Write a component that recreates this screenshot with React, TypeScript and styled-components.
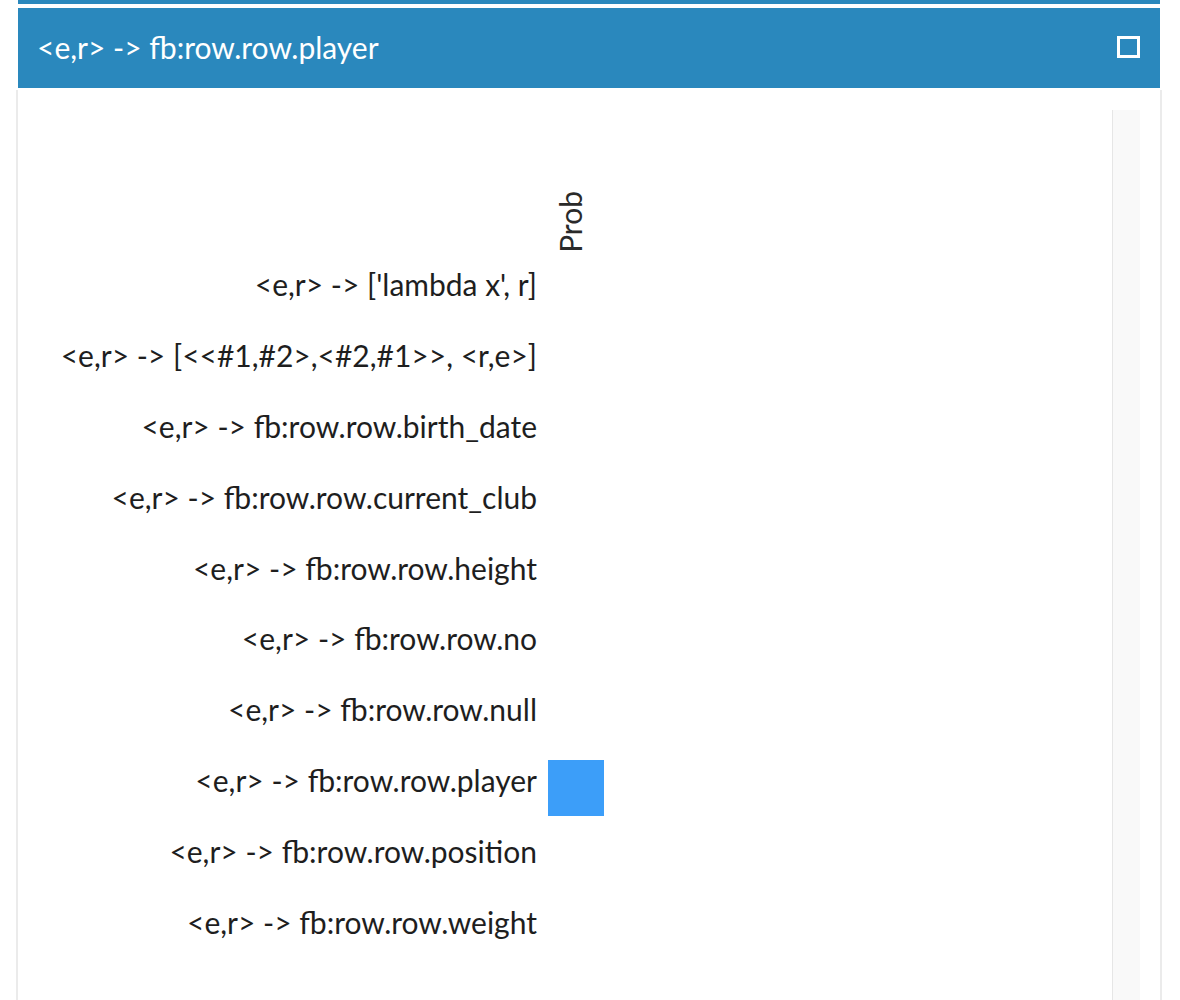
import React from 'react';
import styled, { createGlobalStyle } from 'styled-components';

const GlobalStyle = createGlobalStyle`
  html, body {
    margin: 0;
    padding: 0;
    background: #ffffff;
  }
  body {
    font-family: Lato, "Open Sans", "Liberation Sans", sans-serif;
    color: #1e1e1e;
  }
`;

const Page = styled.div`
  width: 1180px;
  height: 1000px;
  overflow: hidden;
  display: flex;
  flex-direction: column;
`;

const PrevPanelEdge = styled.div`
  margin: 0 20px 0 18px;
  height: 4px;
  background: #2a88bd;
`;

const Panel = styled.section`
  margin-top: 4px;
  flex: 1;
  display: flex;
  flex-direction: column;
`;

const PanelHeader = styled.header`
  margin: 0 20px 0 18px;
  height: 80px;
  background: #2a88bd;
  color: #ffffff;
  display: flex;
  align-items: center;
  justify-content: space-between;
  padding: 0 20px 2px 19px;
  box-sizing: border-box;
`;

const Title = styled.h3`
  margin: 0;
  font-size: 30px;
  font-weight: 400;
`;

const MaximizeButton = styled.button`
  border: none;
  background: none;
  padding: 0;
  width: 23px;
  height: 22px;
  display: flex;
  cursor: pointer;
`;

const PanelBody = styled.div`
  flex: 1;
  margin: 2px 18px 0 16px;
  border: 2px solid #ebebeb;
  border-top: none;
  border-bottom: none;
  padding: 20px 20px 0 0;
  display: flex;
`;

const Content = styled.div`
  flex: 1;
`;

const ScrollTrack = styled.div`
  width: 27px;
  border-left: 1px solid #e6e6e6;
  background: #f9f9f9;
`;

const Heatmap = styled.div`
  display: grid;
  grid-template-columns: 519px 56px;
  column-gap: 11px;
  grid-auto-rows: 70.8px;
  grid-template-rows: 147px;
`;

const ColumnLabelSpacer = styled.div``;

const ColumnLabel = styled.div`
  display: flex;
  align-items: flex-end;
  justify-content: center;
  padding-bottom: 4px;
  box-sizing: border-box;
`;

const VerticalText = styled.span`
  writing-mode: vertical-rl;
  transform: rotate(180deg);
  font-size: 30px;
  color: #2a2a2a;
  margin-right: 12px;
`;

const RowLabel = styled.div`
  display: flex;
  align-items: center;
  justify-content: flex-end;
  padding-bottom: 16px;
  box-sizing: border-box;
  font-size: 30px;
  white-space: nowrap;
`;

const CellSlot = styled.div`
  display: flex;
  align-items: center;
`;

const Cell = styled.div<{ $value: number }>`
  width: 56px;
  height: 56px;
  background: ${(p) => (p.$value > 0 ? '#3c9ef9' : 'transparent')};
`;

const rows: { label: string; prob: number }[] = [
  { label: "<e,r> -> ['lambda x', r]", prob: 0 },
  { label: '<e,r> -> [<<#1,#2>,<#2,#1>>, <r,e>]', prob: 0 },
  { label: '<e,r> -> fb:row.row.birth_date', prob: 0 },
  { label: '<e,r> -> fb:row.row.current_club', prob: 0 },
  { label: '<e,r> -> fb:row.row.height', prob: 0 },
  { label: '<e,r> -> fb:row.row.no', prob: 0 },
  { label: '<e,r> -> fb:row.row.null', prob: 0 },
  { label: '<e,r> -> fb:row.row.player', prob: 1 },
  { label: '<e,r> -> fb:row.row.position', prob: 0 },
  { label: '<e,r> -> fb:row.row.weight', prob: 0 },
];

export default function App() {
  return (
    <Page>
      <GlobalStyle />
      <PrevPanelEdge />
      <Panel>
        <PanelHeader>
          <Title>{'<e,r> -> fb:row.row.player'}</Title>
          <MaximizeButton aria-label="maximize">
            <svg width="23" height="22" viewBox="0 0 23 22">
              <rect x="1.5" y="1.5" width="20" height="19" fill="none" stroke="#ffffff" strokeWidth="3" />
            </svg>
          </MaximizeButton>
        </PanelHeader>
        <PanelBody>
          <Content>
            <Heatmap>
              <ColumnLabelSpacer />
              <ColumnLabel>
                <VerticalText>Prob</VerticalText>
              </ColumnLabel>
              {rows.map((r) => (
                <React.Fragment key={r.label}>
                  <RowLabel>{r.label}</RowLabel>
                  <CellSlot>
                    <Cell $value={r.prob} />
                  </CellSlot>
                </React.Fragment>
              ))}
            </Heatmap>
          </Content>
          <ScrollTrack />
        </PanelBody>
      </Panel>
    </Page>
  );
}
